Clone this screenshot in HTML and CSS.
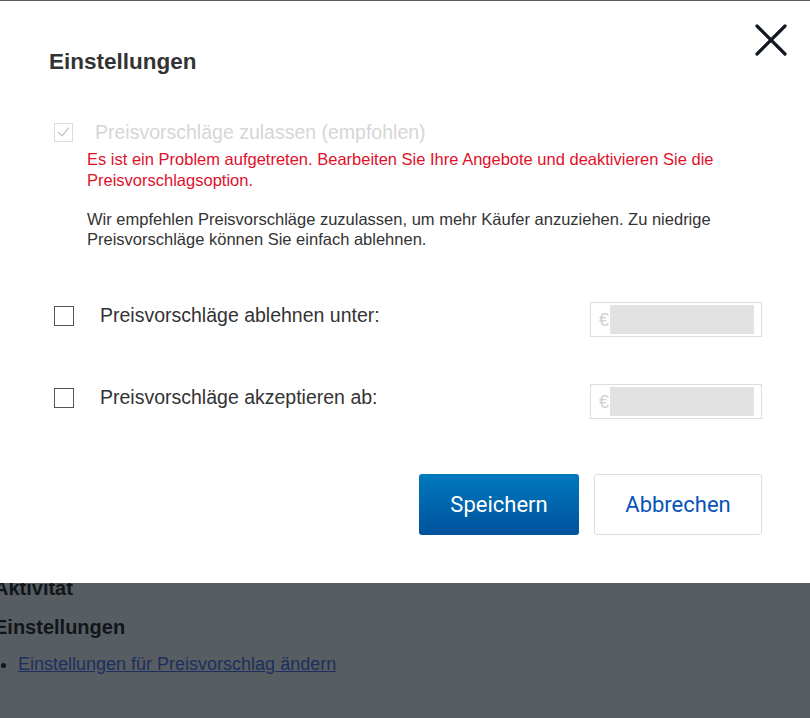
FILE: index.html
```html
<!DOCTYPE html>
<html>
<head>
	<meta charset="utf-8">
	<title>Einstellungen</title>
	<link rel="stylesheet" href="styles.css">
</head>
<body>

	<div class="page">
		<h3>Aktivität</h3>
		<h3>Einstellungen</h3>
		<ul>
			<li><a href="#">Einstellungen für Preisvorschlag ändern</a></li>
		</ul>
	</div>

	<div class="overlay"></div>

	<div class="modal" role="dialog">
		<button class="close" aria-label="Schließen">
			<svg width="34" height="34" viewBox="0 0 34 34">
				<path d="M3 3 L31 31 M31 3 L3 31" stroke="#111820" stroke-width="3.2" stroke-linecap="round" fill="none"/>
			</svg>
		</button>

		<h2 class="title">Einstellungen</h2>

		<div class="row disabled">
			<span class="box checked">
				<svg width="18" height="18" viewBox="0 0 18 18">
					<path d="M3.5 9.5 L7.5 13 L14.5 4.5" stroke="#c4c4c4" stroke-width="1.3" fill="none"/>
				</svg>
			</span>
			<span class="label">Preisvorschläge zulassen (empfohlen)</span>
		</div>
		<p class="error">Es ist ein Problem aufgetreten. Bearbeiten Sie Ihre Angebote und deaktivieren Sie die Preisvorschlagsoption.</p>
		<p class="hint">Wir empfehlen Preisvorschläge zuzulassen, um mehr Käufer anzuziehen. Zu niedrige Preisvorschläge können Sie einfach ablehnen.</p>

		<div class="row price-row first">
			<span class="box"></span>
			<span class="label">Preisvorschläge ablehnen unter:</span>
			<div class="price"><span class="cur">€</span><span class="field"></span></div>
		</div>

		<div class="row price-row">
			<span class="box"></span>
			<span class="label">Preisvorschläge akzeptieren ab:</span>
			<div class="price"><span class="cur">€</span><span class="field"></span></div>
		</div>

		<div class="actions">
			<button class="btn primary">Speichern</button>
			<button class="btn secondary">Abbrechen</button>
		</div>
	</div>

</body>
</html>
```

FILE: styles.css
```css
html, body {
	height: 100%;
}

body {
	margin: 0;
	padding: 0;
	background: #fff;
	font-family: "Liberation Sans", Arial, sans-serif;
	color: #111;
	overflow: hidden;
}

/* page behind the dialog */
.page {
	padding-top: 576px;
	margin-left: -6px;
}

.page h3 {
	margin: 0 0 15px;
	font-size: 20px;
	line-height: 24px;
	font-weight: bold;
}

.page ul {
	margin: 0;
	padding-left: 24px;
	font-size: 18px;
	line-height: 20px;
}

.page a {
	color: #3665f3;
}

.overlay {
	position: fixed;
	top: 0;
	left: 0;
	right: 0;
	bottom: 0;
	background: rgba(17, 24, 32, 0.7);
}

/* dialog */
.modal {
	position: absolute;
	top: 1px;
	left: 0;
	right: 0;
	box-sizing: border-box;
	background: #fff;
	padding: 48px 48px 48px 49px;
	color: #333;
}

.close {
	position: absolute;
	top: 22px;
	right: 22px;
	width: 34px;
	height: 34px;
	padding: 0;
	border: 0;
	background: none;
}

.close svg {
	display: block;
}

.title {
	margin: 0;
	font-size: 22.5px;
	line-height: 26px;
	font-weight: bold;
	color: #333;
}

.row {
	display: flex;
	align-items: center;
}

.row.disabled {
	margin-top: 47px;
	height: 20px;
}

.box {
	box-sizing: border-box;
	width: 20px;
	height: 20px;
	margin-left: 5px;
	border: 1px solid #555;
	background: #fff;
	flex: none;
}

.box.checked {
	width: 19px;
	height: 19px;
	border-color: #dcdcdc;
	display: flex;
	align-items: center;
	justify-content: center;
}

.label {
	margin-left: 22px;
	font-size: 19.5px;
	line-height: 22px;
	color: #333;
}

.disabled .label {
	color: #d6d6d6;
}

.error,
.hint {
	margin: 0 0 0 38px;
	font-size: 16.5px;
	line-height: 21px;
}

.error {
	margin-top: 7px;
	color: #e0102a;
}

.hint {
	margin-top: 18px;
	color: #333;
	line-height: 20px;
}

.price-row {
	align-items: flex-start;
	margin-top: 47px;
}

.price-row.first {
	margin-top: 53px;
}

.price-row .box {
	margin-top: 4px;
}

.price-row .label {
	margin-top: 2px;
	margin-left: 26px;
}

.price {
	box-sizing: border-box;
	margin-left: auto;
	width: 172px;
	height: 35px;
	border: 1px solid #ddd;
	display: flex;
	align-items: stretch;
	padding: 2px 7px 2px 8px;
}

.cur {
	width: 11px;
	font-size: 18px;
	line-height: 31px;
	color: #d0d0d0;
	overflow: hidden;
}

.field {
	flex: 1;
	background: #e2e2e2;
}

.actions {
	display: flex;
	justify-content: flex-end;
	gap: 15px;
	margin-top: 55px;
}

.btn {
	box-sizing: border-box;
	height: 61px;
	border-radius: 3px;
	font-family: Roboto, "Noto Sans", sans-serif;
	font-size: 22px;
	cursor: pointer;
}

.btn.primary {
	width: 160px;
	border: 0;
	color: #fff;
	background: linear-gradient(#0079be, #00529c);
}

.btn.secondary {
	width: 168px;
	border: 1px solid #ddd;
	background: #fff;
	color: #0654ba;
}
```
